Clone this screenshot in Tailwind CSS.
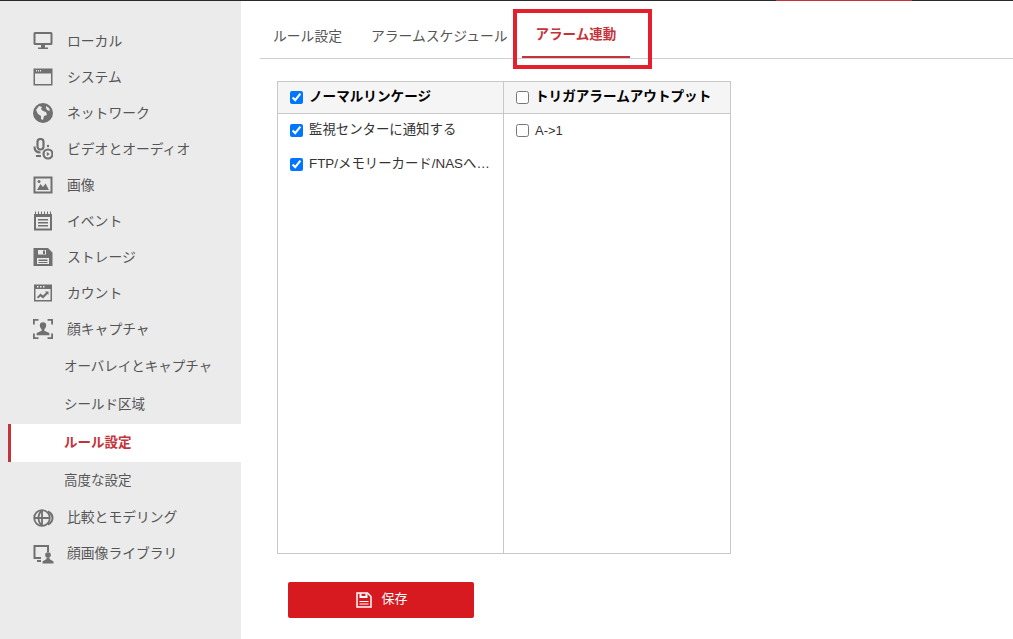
<!DOCTYPE html>
<html lang="ja">
<head>
  <meta charset="UTF-8" />
  <title>ルール設定</title>
  <script src="https://cdn.jsdelivr.net/npm/@tailwindcss/browser@4"></script>
</head>
<body class="bg-white h-[639px] w-[1013px] overflow-hidden text-[13.8px] text-[#555] font-['Liberation_Sans','Noto_Sans_CJK_JP',sans-serif]">
  <!-- top strip -->
  <div class="h-px bg-[#2a2a2a] flex justify-end pr-[101px]"><div class="w-[136px] bg-[#c4333b]"></div></div>

  <div class="flex h-[638px]">
    <!-- sidebar -->
    <aside class="w-[241px] shrink-0 bg-[#ebebeb] pt-[22px]">
      <a class="h-9 flex items-center pl-[33px] gap-[14px]">
        <svg class="w-5 h-5" viewBox="0 0 20 20" fill="#707070"><path fill-rule="evenodd" d="M2 1h16a1.500 1.500 0 0 1 1.500 1.500v10A1.500 1.500 0 0 1 18 14H2a1.500 1.500 0 0 1-1.500-1.500v-10A1.500 1.500 0 0 1 2 1zm.500 2v9h15V3z"/><path d="M8 14h4v2.500h3V18H5v-1.500h3z"/></svg>
        <span class="pt-[2px]">ローカル</span>
      </a>
      <a class="h-9 flex items-center pl-[33px] gap-[14px]">
        <svg class="w-5 h-5" viewBox="0 0 20 20" fill="#707070"><path fill-rule="evenodd" d="M.500 1.500h19v17H.500zm1.500 5v10.500h16V6.500zm1-3.500v1.500h1V3zm2 0v1.500h1V3zm2 0v1.500h1V3z"/></svg>
        <span class="pt-[2px]">システム</span>
      </a>
      <a class="h-9 flex items-center pl-[33px] gap-[14px]">
        <svg class="w-5 h-5" viewBox="0 0 20 20" fill="#707070"><path fill-rule="evenodd" d="M10 0a10 10 0 1 0 0 20 10 10 0 0 0 0-20zM3 7l3-4 3 1-1 2 2 2 3 1 1 3-3 1-1 4-2-1v-3l-3-2zm10-4 3 2 1 3-3-1-1-2z"/></svg>
        <span class="pt-[2px]">ネットワーク</span>
      </a>
      <a class="h-9 flex items-center pl-[33px] gap-[14px]">
        <svg class="w-5 h-[22px]" viewBox="0 0 20 22" fill="none" stroke="#707070" stroke-width="2.200"><rect x="4.500" y="1" width="6" height="10.500" rx="3"/><path d="M1.500 8.500c0 4 2.500 6 6 6M3 18h5"/><circle cx="15" cy="8" r="1.200" fill="#707070" stroke="none"/><circle cx="15" cy="16" r="4.500"/><path d="M13.800 14v4l3-2z" fill="#707070" stroke="none"/></svg>
        <span class="pt-[2px]">ビデオとオーディオ</span>
      </a>
      <a class="h-9 flex items-center pl-[33px] gap-[14px]">
        <svg class="w-5 h-5" viewBox="0 0 20 20" fill="#707070"><path fill-rule="evenodd" d="M.500 1.500h19v17H.500zm2 2v13h15v-13z"/><path d="M4 15l3.500-6 2.500 3 2.500-3.500L16 15z"/><circle cx="6" cy="6.500" r="1.500"/></svg>
        <span class="pt-[2px]">画像</span>
      </a>
      <a class="h-9 flex items-center pl-[33px] gap-[14px]">
        <svg class="w-5 h-5" viewBox="0 0 20 20" fill="#707070"><path fill-rule="evenodd" d="M1 3h1V.500h1V3h2V.500h1V3h2V.500h1V3h2V.500h1V3h2V.500h1V3h2V.500h1V3h1v16.500H1zm2 3v11.500h14V6z"/><path d="M5 8h10v1.500H5zM5 11h10v1.500H5zM5 14h10v1.500H5z"/></svg>
        <span class="pt-[2px]">イベント</span>
      </a>
      <a class="h-9 flex items-center pl-[33px] gap-[14px]">
        <svg class="w-5 h-5" viewBox="0 0 20 20" fill="#707070"><path fill-rule="evenodd" d="M.500 1h14.500l4.500 4.500V19H.500zM5 3v4.500h8V3zm-1 8v6h12v-6z"/><path d="M5.500 12.500h9V14h-9zM5.500 15h9v1h-9z"/><path d="M10 3.500h2V7h-2z"/></svg>
        <span class="pt-[2px]">ストレージ</span>
      </a>
      <a class="h-9 flex items-center pl-[33px] gap-[14px]">
        <svg class="w-5 h-5" viewBox="0 0 20 20" fill="#707070"><path fill-rule="evenodd" d="M1 1.500h18v17H1zM2.500 6v11h15V6zM4 3v1.500h1.500V3zm3 0v1.500h1.500V3zm3 0v1.500h1.500V3z"/><path d="M4 14l3.500-3.500 2.500 2 3-3-1-1h3.500V12l-1-1-4.500 4.500-2.500-2L5 15.500z"/></svg>
        <span class="pt-[2px]">カウント</span>
      </a>
      <a class="h-9 flex items-center pl-[33px] gap-[14px]">
        <svg class="w-5 h-[22px]" viewBox="0 0 22 22" fill="#707070"><path d="M0 0h6v2H2v4H0zM16 0h6v6h-2V2h-4zM0 16h2v4h4v2H0zM20 16h2v6h-6v-2h4z"/><path d="M11 3.500a3.500 3.500 0 0 1 3.500 3.500c0 2-1 3.500-2 4.500v1.500l5.500 2.500V18H4v-2.500L9.500 13v-1.500c-1-1-2-2.500-2-4.500A3.500 3.500 0 0 1 11 3.500z"/></svg>
        <span class="pt-[2px]">顔キャプチャ</span>
      </a>

      <a class="h-[38px] flex items-center pl-[64px] mt-[1px] text-[13.5px]">オーバレイとキャプチャ</a>
      <a class="h-[38px] flex items-center pl-[64px] text-[13.5px]">シールド区域</a>
      <a class="h-[38px] flex items-center pl-[53px] ml-2 bg-white border-l-[3px] border-[#c4333b] text-[#c4333b] font-bold text-[13.5px]">ルール設定</a>
      <a class="h-[38px] flex items-center pl-[64px] text-[13.5px]">高度な設定</a>

      <a class="h-9 flex items-center pl-[33px] gap-[14px]">
        <svg class="w-5 h-5 overflow-visible" viewBox="0 0 20 20" fill="none" stroke="#707070" stroke-width="1.800"><circle cx="9" cy="10" r="7.800"/><path d="M9 2.200v15.600M1.500 10h15"/><path d="M9 2.500c-2.500 2-3.500 4.500-3.500 7.500s1 5.500 3.500 7.500"/><path d="M15 3.500c3 1.500 4.500 3.500 4.500 6.500 0 3-1.500 5-4.500 6.500" stroke-width="2"/></svg>
        <span>比較とモデリング</span>
      </a>
      <a class="h-9 flex items-center pl-[33px] gap-[14px]">
        <svg class="w-5 h-5 overflow-visible" viewBox="0 0 20 20" fill="#707070"><path d="M.500 1h15.500v7h-2V3H2.500v10H8v2H.500z"/><path d="M4 16h4v2H4z"/><circle cx="15" cy="11" r="2.800"/><path d="M13.500 13.500h3v1.500l4 2.500v2h-11v-2l4-2.500z"/></svg>
        <span>顔画像ライブラリ</span>
      </a>
    </aside>

    <!-- main -->
    <main class="flex-1 relative">
      <!-- tabs -->
      <div class="h-[58px] ml-[19px] border-b border-[#cfcfcf] flex items-start pl-[13px]">
        <a class="pt-[26px]">ルール設定</a>
        <a class="pt-[26px] ml-[29px]">アラームスケジュール</a>
        <a class="ml-[14px] w-[108px] h-[57px] border-b-2 border-[#c4333b] pt-[24px] pl-[14px] text-[#c4333b] font-bold text-[13.5px]">アラーム連動</a>
      </div>
      <!-- annotation box from the screenshot -->
      <div class="absolute left-[272px] top-[8px] w-[139px] h-[60px] border-4 border-[#e5202e]"></div>

      <!-- linkage table -->
      <div class="ml-[36px] mt-[22px] w-[454px] h-[473px] border border-[#c8c8c8] flex text-[13.4px]">
        <div class="w-[226px] border-r border-[#c8c8c8]">
          <div class="h-[32px] bg-[#f5f5f5] border-b border-[#c8c8c8] flex items-center pl-3 gap-[6px] text-black font-bold text-[13.6px]">
            <input type="checkbox" checked class="w-[13px] h-[13px] accent-[#0075ff]" />
            <span>ノーマルリンケージ</span>
          </div>
          <div class="pt-[8px] pl-3 text-[#333]">
            <label class="h-[17px] flex items-center gap-[6px]">
              <input type="checkbox" checked class="w-[13px] h-[13px] accent-[#0075ff]" />
              <span>監視センターに通知する</span>
            </label>
            <label class="h-[17px] mt-[17px] flex items-center gap-[6px]">
              <input type="checkbox" checked class="w-[13px] h-[13px] accent-[#0075ff]" />
              <span class="w-[182px] truncate">FTP/メモリーカード/NASへのアップロード</span>
            </label>
          </div>
        </div>
        <div class="flex-1">
          <div class="h-[32px] bg-[#f5f5f5] border-b border-[#c8c8c8] flex items-center pl-3 gap-[6px] text-black font-bold text-[13.6px]">
            <input type="checkbox" class="w-[13px] h-[13px]" />
            <span>トリガアラームアウトプット</span>
          </div>
          <div class="pt-[8px] pl-3 text-[#333]">
            <label class="h-[17px] flex items-center gap-[6px]">
              <input type="checkbox" class="w-[13px] h-[13px]" />
              <span class="text-[13px]">A-&gt;1</span>
            </label>
          </div>
        </div>
      </div>

      <button class="ml-[47px] mt-[28px] w-[186px] h-9 pl-[2px] bg-[#d71920] rounded-[2px] text-white text-[13px] flex items-center justify-center gap-[9px]">
        <svg class="w-4 h-4" viewBox="0 0 16 16" fill="none" stroke="#fff"><path stroke-width="1.500" d="M1 1h10.500L15 4.500V15H1z"/><path stroke-width="2" d="M4.500 1.500V5h6V1.500"/><path stroke-width="1.200" d="M3.500 9.500h9M3.500 12h9"/></svg>
        <span class="pb-[2px]">保存</span>
      </button>
    </main>
  </div>
</body>
</html>
